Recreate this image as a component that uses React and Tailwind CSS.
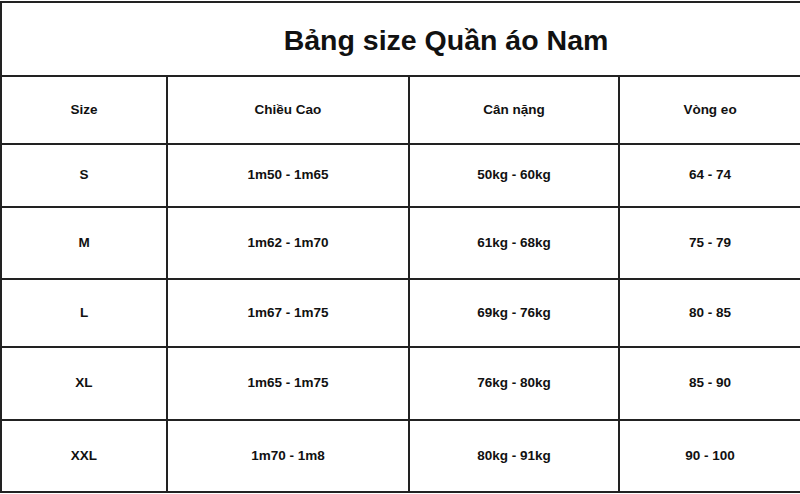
import React from "react";

const rows = [
  { h: "h-[63px]", c: ["S", "1m50 - 1m65", "50kg - 60kg", "64 - 74"] },
  { h: "h-[72px]", c: ["M", "1m62 - 1m70", "61kg - 68kg", "75 - 79"] },
  { h: "h-[68px]", c: ["L", "1m67 - 1m75", "69kg - 76kg", "80 - 85"] },
  { h: "h-[73px]", c: ["XL", "1m65 - 1m75", "76kg - 80kg", "85 - 90"] },
  { h: "h-[72px]", c: ["XXL", "1m70 - 1m8", "80kg - 91kg", "90 - 100"] },
];

function Row({ h, cells }) {
  const widths = ["w-[166px]", "w-[242px]", "w-[210px]", "flex-1"];
  return (
    <div className={`flex ${h}`}>
      {cells.map((t, i) => (
        <div
          key={i}
          className={`${widths[i]} flex items-center justify-center border-b-2 border-[#222] ${i < 3 ? "border-r-2" : ""} text-[13.5px] font-bold text-[#111]`}
        >
          {t}
        </div>
      ))}
    </div>
  );
}

export default function App() {
  return (
    <div
      className="w-[800px] h-[494px] overflow-hidden bg-white"
      style={{ fontFamily: '"Liberation Sans", Arial, sans-serif' }}
    >
      <div className="border-t-2 border-l-2 border-[#222] mt-px">
        <div className="h-[74px] flex items-center justify-center pl-[90px] pt-[3px] border-b-2 border-[#222] text-[28.5px] font-bold text-[#111]">
          Bảng size Quần áo Nam
        </div>
        <Row h="h-[68px]" cells={["Size", "Chiều Cao", "Cân nặng", "Vòng eo"]} />
        {rows.map((r, i) => (
          <Row key={i} h={r.h} cells={r.c} />
        ))}
      </div>
    </div>
  );
}
